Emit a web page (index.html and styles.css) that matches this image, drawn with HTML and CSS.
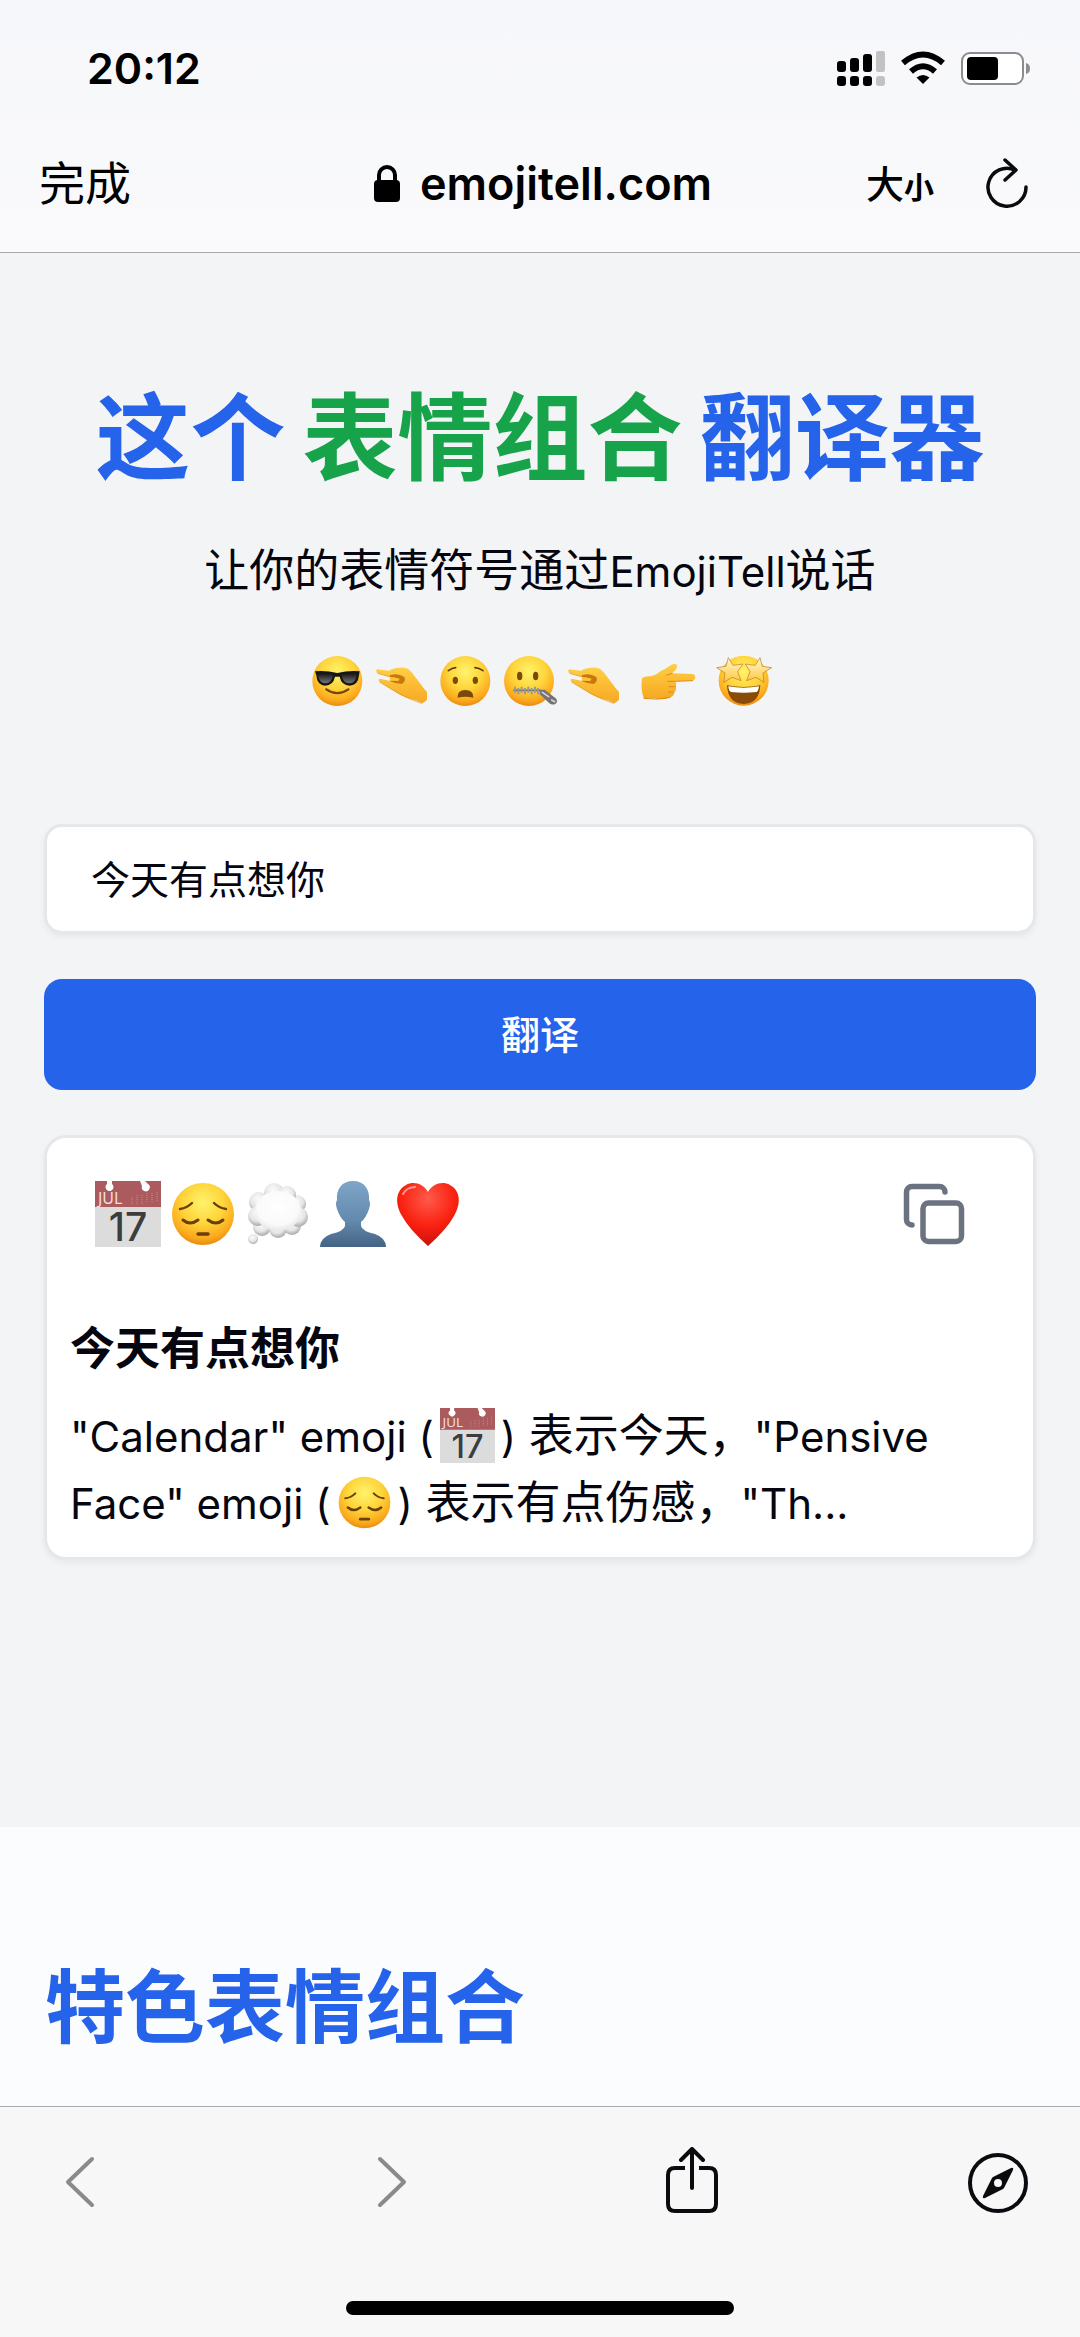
FILE: index.html
```html
<!DOCTYPE html>
<html lang="zh-CN">
<head>
<meta charset="utf-8">
<meta name="viewport" content="width=device-width, initial-scale=1">
<title>EmojiTell</title>
<link rel="stylesheet" href="styles.css">
</head>
<body>
<svg class="defs" aria-hidden="true">
  <defs>
    <radialGradient id="skin" cx=".5" cy=".32" r=".68">
      <stop offset="0" stop-color="#fff36c"/><stop offset=".5" stop-color="#fed43a"/><stop offset=".85" stop-color="#fba91c"/><stop offset="1" stop-color="#e78b12"/>
    </radialGradient>
    <linearGradient id="palm" x1="0" y1="0" x2="0" y2="1">
      <stop offset="0" stop-color="#ffcf45"/><stop offset="1" stop-color="#f6a822"/>
    </linearGradient>
    <linearGradient id="steel" x1="0" y1="0" x2="0" y2="1">
      <stop offset="0" stop-color="#7fa5c8"/><stop offset=".6" stop-color="#6389ad"/><stop offset="1" stop-color="#456384"/>
    </linearGradient>
    <radialGradient id="red" cx=".5" cy=".25" r=".75">
      <stop offset="0" stop-color="#ff5a4b"/><stop offset=".6" stop-color="#f9200f"/><stop offset="1" stop-color="#c9120c"/>
    </radialGradient>
    <radialGradient id="puff" cx=".45" cy=".35" r=".65">
      <stop offset="0" stop-color="#fbfbfb"/><stop offset=".6" stop-color="#e6e6e6"/><stop offset="1" stop-color="#a8a8a8"/>
    </radialGradient>
    <radialGradient id="cloud" cx=".5" cy=".4" r=".6">
      <stop offset="0" stop-color="#fff"/><stop offset=".75" stop-color="#fafafa"/><stop offset="1" stop-color="#e6e6e6"/>
    </radialGradient>
    <linearGradient id="lens" x1="0" y1="0" x2="0" y2="1">
      <stop offset="0" stop-color="#111"/><stop offset="1" stop-color="#777"/>
    </linearGradient>
    <linearGradient id="star" x1="0" y1="0" x2="0" y2="1">
      <stop offset="0" stop-color="#fff9d0"/><stop offset="1" stop-color="#ffc63c"/>
    </linearGradient>
  </defs>
  <symbol id="pinch" viewBox="0 0 156 156">
    <path fill="url(#palm)" d="M4 46C5 41 12 43 18 44L42 47C54 41 70 37 86 38C98 39 106 46 112 54L136 86Q152 108 165 120Q158 136 142 145Q126 135 104 131C88 127 72 118 58 108L14 81C8 75 11 71 18 72L46 78L44 66C30 61 18 58 8 55Q2 51 4 46Z"/>
    <path fill="#c9780e" d="M46 60Q70 54 88 66Q94 78 80 87Q62 86 42 77L70 78L74 71Q60 66 44 65Z"/>
    <path fill="none" stroke="#e08c17" stroke-width="2" d="M14 81Q38 96 58 108T104 131T142 145M8 55Q26 61 44 65"/>
  </symbol>
  <symbol id="pensive" viewBox="0 0 66 66">
    <ellipse cx="33" cy="33" rx="31" ry="31" fill="url(#skin)"/>
    <g fill="none" stroke="#6b4008" stroke-width="2.4" stroke-linecap="round">
      <path d="M10 28Q17 27 22 22M56 28Q49 27 44 22"/>
      <path stroke-width="3" d="M13 39Q20 45 28 39M38 39Q46 45 53 39"/>
      <path stroke-width="3.4" d="M28 53H38"/>
    </g>
  </symbol>
  <symbol id="sheet" viewBox="0 0 66 66">
    <path fill="#dcdcdc" d="M0 25H66V66H0Z"/>
    <path fill="#ab5a5d" d="M0 0H66V26H0Z"/>
    <path fill="#fff" d="M12 0H17V3A4 4 0 1 1 12 3ZM45 0H50L53 3A4 4 0 1 1 47 5Z"/>
    <path stroke="#c98d8f" stroke-width="1" stroke-dasharray="1 1" d="M37 16V23M42 14V23M47 14V23M52 12V22M57 12V22M62 11V20"/>
  </symbol>
</svg>

<header class="top">
  <div class="status">
    <span class="clock">20:12</span>
    <span class="signals">
      <svg width="48" height="35" viewBox="0 0 48 35" aria-label="信号">
        <g><rect x="0" y="10" width="9" height="11" rx="3"/><rect x="13" y="7" width="9" height="14" rx="3"/><rect x="26" y="3" width="9" height="18" rx="3"/><rect x="0" y="25" width="9" height="10" rx="3"/><rect x="13" y="25" width="9" height="10" rx="3"/><rect x="26" y="25" width="9" height="10" rx="3"/></g>
        <g fill="#c2c2c2"><rect x="39" y="0" width="9" height="21" rx="2"/><rect x="39" y="25" width="9" height="10" rx="3"/></g>
      </svg>
      <svg width="46" height="35" viewBox="0 0 46 35" aria-label="无线网络">
        <g fill="none" stroke="#000" stroke-width="6"><path d="M3 12Q23 -5 43 12"/><path d="M11 20.500Q23 10 35 20.500"/></g>
        <path d="M16.500 26.500Q23 21.500 29.500 26.500L23 33Z"/>
      </svg>
      <svg width="70" height="35" viewBox="0 0 70 35" aria-label="电池">
        <rect x="1" y="2" width="61" height="31" rx="8" fill="#fff" stroke="#8c8c8c" stroke-width="2"/>
        <rect x="6" y="6" width="31" height="23" rx="4"/>
        <path fill="#8c8c8c" d="M65 12Q69 13 69 17.500T65 23Z"/>
      </svg>
    </span>
  </div>
  <nav class="address">
    <button class="done" type="button">完成</button>
    <div class="site">
      <svg width="26" height="38" viewBox="0 0 26 38" aria-hidden="true"><rect y="16" width="26" height="22" rx="4"/><path fill="none" stroke="#000" stroke-width="4" d="M5 18V11A8 8 0 0 1 21 11V18"/></svg>
      <span>emojitell.com</span>
    </div>
    <div class="tools">
      <button class="textsize" type="button"><span class="big">大</span><span class="small">小</span></button>
      <button type="button" aria-label="重新载入">
        <svg width="42" height="52" viewBox="0 0 42 52" fill="none" stroke="#0b0b0b" stroke-width="3.500" stroke-linecap="round" stroke-linejoin="round"><path d="M40 30A19 19 0 1 1 29 13"/><path d="M19 3L30 13L19 23"/></svg>
      </button>
    </div>
  </nav>
</header>

<main>
  <section class="hero">
    <h1><span>这个</span> <span class="green">表情组合</span> <span>翻译器</span></h1>
    <p class="tagline">让你的表情符号通过<span class="latin">EmojiTell</span>说话</p>
    <div class="strip">
      <svg class="emo" viewBox="0 0 156 156" aria-label="墨镜笑脸">
        <circle cx="79" cy="78" r="75" fill="url(#skin)"/>
        <path d="M12 49Q45 46 79 54Q113 46 146 49L144 61Q141 91 117 92Q91 91 86 65H72Q67 91 42 92Q18 90 16 61Z" fill="#161616"/>
        <path d="M20 56Q44 51 66 59Q64 83 43 85Q23 84 20 56ZM138 56Q114 51 92 59Q94 83 115 85Q135 84 138 56Z" fill="url(#lens)"/>
        <path d="M46 103Q79 126 112 103" fill="none" stroke="#7a450b" stroke-width="7" stroke-linecap="round"/>
      </svg>
      <svg class="emo" aria-label="捏手"><use href="#pinch"/></svg>
      <svg class="emo" viewBox="0 0 156 156" aria-label="担忧">
        <circle cx="79" cy="78" r="75" fill="url(#skin)"/>
        <path d="M28 47Q40 39 50 38M132 47Q120 39 108 38" fill="none" stroke="#5f390a" stroke-width="5" stroke-linecap="round"/>
        <g fill="#7a4a0b"><ellipse cx="49" cy="76" rx="8" ry="11"/><ellipse cx="109" cy="76" rx="8" ry="11"/><path d="M56 128Q54 105 79 105T103 128Q79 122 56 128Z"/></g>
      </svg>
      <svg class="emo" viewBox="0 0 156 156" aria-label="闭嘴">
        <circle cx="78" cy="78" r="75" fill="url(#skin)"/>
        <g fill="#7a4a0b"><ellipse cx="50" cy="63" rx="8" ry="13"/><ellipse cx="98" cy="63" rx="8" ry="13"/></g>
        <path d="M31 106H112" stroke="#666" stroke-width="5"/>
        <path d="M36 95V113M46 99V118M56 95V113M66 99V118M76 95V113M86 99V118M96 95V113M105 99V118" stroke="#999" stroke-width="6"/>
        <path d="M109 104L125 104L158 130Q166 140 158 146Q148 152 139 145L111 118Z" fill="#737373"/>
        <path d="M118 112L137 125M146 135L155 140" stroke="#d5d5d5" stroke-width="5" stroke-linecap="round"/>
      </svg>
      <svg class="emo" aria-label="捏手"><use href="#pinch"/></svg>
      <svg class="emo spaced" viewBox="0 0 156 156" aria-label="指向右边">
        <path fill="url(#palm)" d="M0 70Q10 63 30 63Q44 60 55 49Q70 43 86 31Q100 22 105 31Q107 41 91 55L153 57Q160 59 160 67T153 77L100 79Q105 86 101 95Q105 104 97 111Q97 123 85 127Q70 135 50 132Q25 128 5 130Q-5 100 0 70Z"/>
        <path fill="none" stroke="#df8b17" stroke-width="3" d="M153 77L100 79H76M101 95H80M97 111H78M85 127Q45 136 5 130M91 55L72 61"/>
      </svg>
      <svg class="emo spaced" viewBox="0 0 156 156" aria-label="星星眼">
        <circle cx="80" cy="77" r="75" fill="url(#skin)"/>
        <path d="M30 91Q80 101 130 91Q128 145 80 147Q32 145 30 91Z" fill="#8b4b08"/>
        <path d="M34 94Q80 102 126 94Q124 110 118 111Q80 116 42 111Q35 109 34 94Z" fill="#fff"/>
        <g fill="url(#star)" stroke="#b87a1c" stroke-width="2" stroke-linejoin="round"><path d="M34 8L48 31L78 27L62 50L72 77L45 67L20 82L24 54L-1 38L27 34Z"/><path d="M129 8L115 31L85 27L99 50L89 77L117 67L141 82L138 54L164 38L136 34Z"/></g>
      </svg>
    </div>

    <form class="form" onsubmit="return false">
      <input class="field" type="text" value="今天有点想你" aria-label="要翻译的文字">
      <button class="submit" type="submit">翻译</button>
    </form>

    <article class="card">
      <div class="result">
        <div class="emojis">
          <svg viewBox="0 0 66 66" aria-label="日历"><use href="#sheet"/><text class="cal-month" x="3" y="23">JUL</text><text class="cal-day" x="33" y="60" text-anchor="middle">17</text></svg>
          <svg aria-label="沉思"><use href="#pensive"/></svg>
          <svg viewBox="0 0 66 66" aria-label="想法">
            <g fill="url(#puff)"><circle cx="52" cy="23" r="9"/><circle cx="17" cy="46" r="9"/><circle cx="33" cy="48" r="9"/><circle cx="47" cy="45" r="9"/><circle cx="53" cy="36" r="10"/><circle cx="14" cy="21" r="10"/><circle cx="13" cy="35" r="10"/><circle cx="29" cy="12" r="10"/><circle cx="42" cy="14" r="9"/></g>
            <ellipse cx="33" cy="30" rx="23" ry="20" fill="url(#cloud)"/>
            <circle cx="8" cy="58" r="5" fill="url(#puff)"/>
          </svg>
          <svg viewBox="0 0 66 66" aria-label="人影"><path fill="url(#steel)" d="M33 0C44 0 50 8 49 19Q51 22 49 28Q46 37 41 41V45Q42 50 55 53Q66 57 66 66H0Q0 57 11 53Q24 50 25 45V41Q20 37 17 28Q15 22 17 19C16 8 22 0 33 0Z"/></svg>
          <svg viewBox="0 0 66 66" aria-label="红心"><path fill="url(#red)" d="M33 11C38 2 48 0 55 4C66 10 66 23 59 35Q52 48 33 65Q14 48 7 35C0 23 0 10 11 4C18 0 28 2 33 11Z"/><path d="M8 13Q12 6 20 6" fill="none" stroke="#ff9c93" stroke-width="2" stroke-linecap="round"/></svg>
        </div>
        <button type="button" class="copy" aria-label="复制">
          <svg width="66" height="66" viewBox="0 0 24 24" fill="none" stroke="#6b7280" stroke-width="2" stroke-linecap="round" stroke-linejoin="round"><rect x="8" y="8" width="14" height="14" rx="2"/><path d="M4 16c-1.100 0-2-.9-2-2V4c0-1.100.9-2 2-2h10c1.100 0 2 .9 2 2"/></svg>
        </button>
      </div>
      <h2 class="phrase">今天有点想你</h2>
      <p class="explain"><span class="latin">"Calendar" emoji (</span><svg class="inline" viewBox="0 0 66 66" aria-label="日历"><use href="#sheet"/><text class="cal-month" x="3" y="23">JUL</text><text class="cal-day" x="33" y="60" text-anchor="middle">17</text></svg><span class="latin">)</span> 表示今天，<span class="latin">"Pensive</span> <span class="latin">Face" emoji (</span><svg class="inline" aria-label="沉思"><use href="#pensive"/></svg><span class="latin">)</span> 表示有点伤感，<span class="latin">"Th...</span></p>
    </article>
  </section>

  <section class="featured">
    <h2>特色表情组合</h2>
  </section>
</main>

<footer class="bottom">
  <nav class="toolbar">
    <button type="button" aria-label="后退"><svg width="60" height="68" viewBox="0 0 60 68" fill="none" stroke="#8a8a8a" stroke-width="4" stroke-linecap="round" stroke-linejoin="round"><path d="M42 12L18 35L42 58"/></svg></button>
    <button type="button" aria-label="前进"><svg width="60" height="68" viewBox="0 0 60 68" fill="none" stroke="#8a8a8a" stroke-width="4" stroke-linecap="round" stroke-linejoin="round"><path d="M24 12L48 35L24 58"/></svg></button>
    <button type="button" aria-label="分享"><svg width="60" height="68" viewBox="0 0 60 68" fill="none" stroke="#0b0b0f" stroke-width="4" stroke-linecap="round" stroke-linejoin="round"><path stroke-linecap="butt" d="M23 21H13Q6 21 6 28V57Q6 64 13 64H47Q54 64 54 57V28Q54 21 47 21H37"/><path d="M30 41V3M19 13L30 2L41 13"/></svg></button>
    <button type="button" aria-label="在浏览器中打开"><svg width="60" height="68" viewBox="0 0 60 68"><circle cx="30" cy="36" r="28" fill="none" stroke="#0b0b0f" stroke-width="4"/><path fill="#0b0b0f" fill-rule="evenodd" d="M43 21Q46 20 45 23L36 41L35 42L17 51Q14 52 15 49L24 31L25 30ZM30 32A4 4 0 1 0 30 40A4 4 0 1 0 30 32Z"/></svg></button>
  </nav>
  <div class="home"></div>
</footer>
</body>
</html>
```
FILE: styles.css
```css
* { box-sizing: border-box; }

body {
  margin: 0;
  min-height: 100vh;
  display: flex;
  flex-direction: column;
  background: #fbfcfd;
  color: #05060f;
  font-family: Inter, "Noto Sans CJK SC", sans-serif;
}

h1, h2, p { margin: 0; }

button {
  border: 0;
  padding: 0;
  background: none;
  color: inherit;
  font: inherit;
}

svg { display: block; flex: none; }

.defs { position: absolute; width: 0; height: 0; }

/* Browser chrome, top */
.top {
  background: linear-gradient(#f6f7fa, #fafafc);
  border-bottom: 1px solid #a9a9ad;
  color: #000;
}

.status {
  display: flex;
  justify-content: space-between;
  align-items: center;
  height: 136px;
  padding: 0 49px 0 87px;
}

.clock { font-size: 43px; font-weight: 600; }

.signals { display: flex; gap: 15px; }

.address {
  display: grid;
  grid-template-columns: 1fr auto 1fr;
  align-items: center;
  height: 116px;
  padding: 0 52px 22px 58px;
}

.done {
  justify-self: start;
  margin-left: -19px;
  font-size: 46px;
  line-height: 64px;
}

.site {
  display: flex;
  align-items: center;
  gap: 20px;
  font-size: 45px;
  font-weight: 600;
}

.tools {
  display: flex;
  justify-content: flex-end;
  align-items: center;
  gap: 52px;
}

.textsize {
  display: flex;
  align-items: baseline;
  font-family: "Noto Sans CJK SC", sans-serif;
  font-weight: 500;
  line-height: 56px;
}
.big { font-size: 38px; }
.small { font-size: 30px; font-weight: 700; }

/* Translator */
.hero {
  padding: 113px 44px 267px;
  background: #f3f4f6;
}

h1 {
  display: flex;
  justify-content: center;
  gap: 17px;
  color: #2563eb;
  font: 700 95px/132px "Noto Sans CJK SC", sans-serif;
}

.green { color: #16a34a; }

.tagline {
  margin-top: 40px;
  font-size: 45px;
  line-height: 66px;
  text-align: center;
}

.latin { font-size: 42px; }

.strip {
  display: flex;
  justify-content: center;
  gap: 12px;
  margin-top: 50px;
}

.emo { width: 52px; height: 52px; overflow: visible; }
.spaced { margin-left: 11px; }

.form {
  display: flex;
  flex-direction: column;
  gap: 45px;
  margin-top: 117px;
}

.field {
  width: 100%;
  height: 110px;
  padding: 0 44px 4px;
  border: 3px solid #e5e7eb;
  border-radius: 18px;
  background: #fff;
  box-shadow: 0 3px 6px rgba(0, 0, 0, .05);
  color: inherit;
  font: 400 39px "Noto Sans CJK SC", sans-serif;
}

.submit {
  height: 111px;
  padding-bottom: 6px;
  border-radius: 18px;
  background: #2563eb;
  color: #fff;
  font: 500 39px "Noto Sans CJK SC", sans-serif;
}

.card {
  margin-top: 45px;
  padding: 43px 23px 20px;
  border: 3px solid #e5e7eb;
  border-radius: 22px;
  background: #fff;
  box-shadow: 0 3px 6px rgba(0, 0, 0, .05);
}

.result {
  display: flex;
  justify-content: space-between;
  padding: 0 43px 0 25px;
}

.emojis { display: flex; gap: 9px; }
.emojis svg { width: 66px; height: 66px; overflow: visible; }

.cal-month { font: 400 16px "Noto Sans", sans-serif; fill: #f3dede; }
.cal-day { font: 500 39px Inter, sans-serif; fill: #3d3d3d; }

.phrase {
  margin-top: 66px;
  font: 700 45px/66px "Noto Sans CJK SC", sans-serif;
}

.explain {
  margin-top: 24px;
  font-size: 45px;
  line-height: 66px;
}

.inline {
  display: inline-block;
  width: 55px;
  height: 55px;
  margin: 0 6px;
  vertical-align: -11px;
  overflow: visible;
}

/* Featured combinations */
.featured { padding: 116px 45px 47px; }

.featured h2 {
  color: #2563eb;
  font: 700 80px/116px "Noto Sans CJK SC", sans-serif;
}

/* Browser chrome, bottom */
.bottom {
  margin-top: auto;
  border-top: 1px solid #a9a9ad;
  background: #f7f7f8;
}

.toolbar {
  display: flex;
  justify-content: space-between;
  padding: 40px 52px 0 50px;
}

.home {
  width: 36%;
  height: 14px;
  margin: 86px auto 22px;
  border-radius: 7px;
  background: #000;
}
```
